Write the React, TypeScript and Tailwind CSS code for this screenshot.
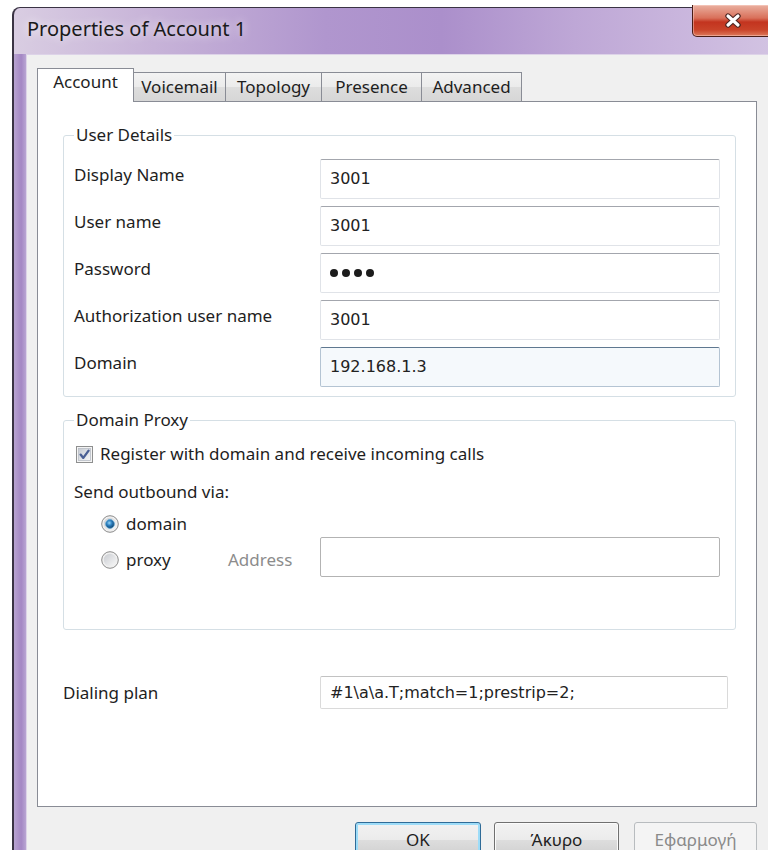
import type { ReactNode } from "react";

const tabs = ["Account", "Voicemail", "Topology", "Presence", "Advanced"];
const tabWidths = ["w-[97px]", "w-[93px]", "w-[97px]", "w-[101px]", "w-[101px]"];

function CloseGlyph() {
  return (
    <svg width="20" height="15" viewBox="0 0 20 15">
      <path d="M5 3 L15 12 M15 3 L5 12" stroke="#4b2420" strokeWidth="5.4" strokeLinecap="round" />
      <path d="M5 3 L15 12 M15 3 L5 12" stroke="#ffffff" strokeWidth="3.2" strokeLinecap="round" />
    </svg>
  );
}

function CheckBox() {
  return (
    <svg width="17" height="17" viewBox="0 0 17 17">
      <defs>
        <linearGradient id="cb-fill" x1="0" y1="0" x2="1" y2="1">
          <stop offset="0" stopColor="#c6cbd3" />
          <stop offset="1" stopColor="#f7f7f7" />
        </linearGradient>
      </defs>
      <rect x="0.5" y="0.5" width="16" height="16" fill="#f4f4f4" stroke="#8e8f8f" />
      <rect x="2.5" y="2.5" width="12" height="12" fill="url(#cb-fill)" stroke="#b9bec6" strokeWidth="0.8" />
      <path
        d="M4.6 8.6 L7.3 11.9 L12.6 4.6"
        fill="none"
        stroke="#4a5f94"
        strokeWidth="2.3"
        strokeLinecap="round"
        strokeLinejoin="round"
      />
    </svg>
  );
}

function Radio({ checked, id }: { checked?: boolean; id: string }) {
  return (
    <svg width="18" height="18" viewBox="0 0 18 18">
      <defs>
        <linearGradient id={`${id}-in`} x1="0" y1="0" x2="1" y2="1">
          <stop offset="0" stopColor="#c9ccd1" />
          <stop offset="1" stopColor="#f8f8f8" />
        </linearGradient>
        <radialGradient id={`${id}-dot`} cx="0.42" cy="0.38" r="0.65">
          <stop offset="0" stopColor="#9ad6f6" />
          <stop offset="0.45" stopColor="#2b7fc0" />
          <stop offset="1" stopColor="#0f3a60" />
        </radialGradient>
      </defs>
      <circle cx="9" cy="9" r="8.3" fill="#efefef" stroke="#8c8c8c" />
      <circle cx="9" cy="9" r="6.2" fill={`url(#${id}-in)`} />
      {checked && <circle cx="9" cy="9" r="4.4" fill={`url(#${id}-dot)`} stroke="#5da7d6" strokeWidth="0.8" />}
    </svg>
  );
}

function Field({ children, className = "" }: { children?: ReactNode; className?: string }) {
  return (
    <div
      className={`flex items-center rounded-[2px] border pl-[9px] font-['DejaVu_Sans',sans-serif] text-[16px] text-[#222] ${className}`}
    >
      {children}
    </div>
  );
}

const plainField = "w-[400px] h-[40px] bg-white border-[#e0e3e8] border-t-[#a3a6ad]";

function Group({ title, className = "", children }: { title: string; className?: string; children: ReactNode }) {
  return (
    <fieldset className={`rounded-[3px] border border-[#d5dfe5] px-[10px] ${className}`}>
      <legend className="px-[2px] leading-[20px]">{title}</legend>
      {children}
    </fieldset>
  );
}

function Row({ label, children }: { label: string; children: ReactNode }) {
  return (
    <div className="flex">
      <div className="w-[246px] pt-[6px] leading-[20px]">{label}</div>
      {children}
    </div>
  );
}

function Password() {
  return (
    <div className="flex gap-[4px]">
      {[0, 1, 2, 3].map((i) => (
        <span key={i} className="h-[8px] w-[8px] rounded-full bg-[#1c1c1c]" />
      ))}
    </div>
  );
}

export default function App() {
  return (
    <div className="h-[850px] w-[768px] overflow-hidden bg-white font-['Noto_Sans',sans-serif] text-[17px] text-[#1e1e1e]">
      <div className="ml-[12px] mt-[7px] flex h-[860px] w-[780px] flex-col rounded-tl-[8px] border-l-2 border-t border-[#3a3344] bg-[linear-gradient(90deg,#d9cde2_0%,#c7b3d8_18%,#b096ce_40%,#ab8fcb_55%,#bea7d6_72%,#cbb8de_88%,#d4c6e3_100%)]">
        {/* caption */}
        <div className="flex h-[46px] items-start">
          <div className="pl-[13px] pt-[9px] text-[20px] leading-[24px] text-[#1a1a1a] [text-shadow:0_0_10px_rgba(255,255,255,0.9)]">
            Properties of Account 1
          </div>
          <div className="ml-auto mr-[18px] mt-[-3px] flex h-[32px] w-[82px] items-center justify-center rounded-b-[5px] border border-t-0 border-[#4a1d17] bg-[linear-gradient(180deg,#eab0a0_0%,#d9705a_42%,#c3341f_55%,#c94329_80%,#dd7a5c_100%)] shadow-[inset_0_0_0_1px_rgba(255,220,210,0.45)]">
            <CloseGlyph />
          </div>
        </div>

        <div className="flex flex-1">
          {/* left frame edge */}
          <div className="w-[12px] bg-[linear-gradient(90deg,#b8a3d1,#a487c4_60%,#b9a5d3)]" />

          <div className="flex-1 border-l border-t border-[#ddd3e8] bg-[#f0f0f0] pl-[10px] pt-[13px]">
            {/* tab strip */}
            <div className="flex h-[33px] items-end">
              {tabs.map((t, i) =>
                i === 0 ? (
                  <div
                    key={t}
                    className={`relative z-10 mb-[-1px] h-[34px] ${tabWidths[i]} border border-b-0 border-[#898c95] bg-white pt-[3px] text-center leading-[20px]`}
                  >
                    {t}
                  </div>
                ) : (
                  <div
                    key={t}
                    className={`-ml-px flex h-[29px] ${tabWidths[i]} items-center justify-center border border-b-0 border-[#898c95] bg-[linear-gradient(180deg,#f3f3f3_0%,#ebebeb_50%,#dddddd_51%,#d6d6d6_100%)] leading-[20px]`}
                  >
                    {t}
                  </div>
                )
              )}
            </div>

            {/* tab page */}
            <div className="h-[706px] w-[720px] border border-[#898c95] bg-white pl-[25px] pr-[20px] pt-[23px]">
              <Group title="User Details">
                <div className="flex flex-col gap-[7px] pb-[9px] pt-[14px]">
                  <Row label="Display Name">
                    <Field className={plainField}>3001</Field>
                  </Row>
                  <Row label="User name">
                    <Field className={plainField}>3001</Field>
                  </Row>
                  <Row label="Password">
                    <Field className={plainField}>
                      <Password />
                    </Field>
                  </Row>
                  <Row label="Authorization user name">
                    <Field className={plainField}>3001</Field>
                  </Row>
                  <Row label="Domain">
                    <Field className="h-[40px] w-[400px] border-[#b4c4d3] border-t-[#5f7890] bg-[#f5f9fc]">
                      192.168.1.3
                    </Field>
                  </Row>
                </div>
              </Group>

              <Group title="Domain Proxy" className="mt-[13px]">
                <div className="pb-[52px] pt-[14px]">
                  <div className="ml-[2px] flex h-[20px] items-center gap-[7px]">
                    <CheckBox />
                    <span className="leading-[20px]">Register with domain and receive incoming calls</span>
                  </div>
                  <div className="mt-[18px] leading-[20px]">Send outbound via:</div>
                  <div className="mt-[12px] flex h-[20px] items-center gap-[7px] pl-[27px]">
                    <Radio id="rd-domain" checked />
                    <span className="leading-[20px]">domain</span>
                  </div>
                  <div className="mt-[3px] flex h-[40px] items-center pl-[27px]">
                    <div className="mt-[6px] flex w-[127px] items-center gap-[7px]">
                      <Radio id="rd-proxy" />
                      <span className="leading-[20px]">proxy</span>
                    </div>
                    <div className="mt-[6px] w-[92px] leading-[20px] text-[#8c8c8c]">Address</div>
                    <Field className="h-[40px] w-[400px] border-[#b3b3b3] bg-white" />
                  </div>
                </div>
              </Group>

              <div className="mt-[46px] flex items-center">
                <div className="w-[257px] leading-[20px]">Dialing plan</div>
                <Field className="h-[33px] w-[408px] border-[#dadada] border-t-[#c2c2c2] bg-white">
                  #1\a\a.T;match=1;prestrip=2;
                </Field>
              </div>
            </div>

            {/* dialog buttons */}
            <div className="mt-[15px] flex w-[720px] justify-end">
              <div className="flex h-[36px] w-[126px] items-center justify-center rounded-[3px] border border-[#2f6b97] bg-[linear-gradient(180deg,#f2f2f2_0%,#ebebeb_50%,#dddddd_51%,#cfcfcf_100%)] shadow-[inset_0_0_0_2px_#9ddcf8]">
                OK
              </div>
              <div className="ml-[13px] flex h-[36px] w-[125px] items-center justify-center rounded-[3px] border border-[#707070] bg-[linear-gradient(180deg,#f2f2f2_0%,#ebebeb_50%,#dddddd_51%,#cfcfcf_100%)] shadow-[inset_0_0_0_1px_#fbfbfb]">
                Άκυρο
              </div>
              <div className="ml-[15px] flex h-[36px] w-[123px] items-center justify-center rounded-[3px] border border-[#b8bcbf] bg-[#f4f4f4] text-[#8a8a8a]">
                Εφαρμογή
              </div>
            </div>
          </div>
        </div>
      </div>
    </div>
  );
}
